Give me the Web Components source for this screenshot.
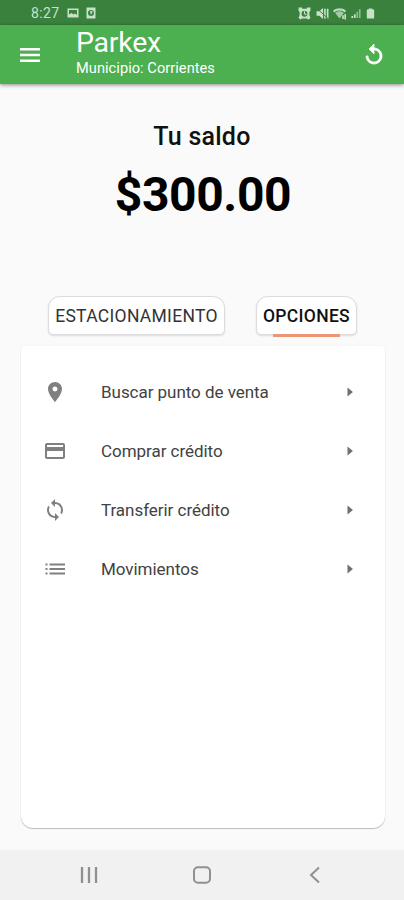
<!DOCTYPE html>
<html lang="es">
<head>
<meta charset="utf-8">
<title>Parkex</title>
<style>
html,body{margin:0;height:100%;background:#fafafa}
body{font-family:Roboto,"Liberation Sans",sans-serif}
</style>
</head>
<body>
<parkex-app></parkex-app>
<script>
const define = (name, html) => customElements.define(name, class extends HTMLElement {
  constructor() {
    super();
    this.attachShadow({ mode: 'open' }).innerHTML = html;
  }
});

const ICONS = {
  menu: '<path d="M2 5h20v2.600H2zm0 5.700h20v2.600H2zM2 16.400h20V19H2z"/>',
  replay: '<path stroke="currentColor" stroke-width=".8" d="M12 5V1L7 6l5 5V7c3.31 0 6 2.69 6 6s-2.690 6-6 6-6-2.690-6-6H4c0 4.420 3.580 8 8 8s8-3.580 8-8-3.580-8-8-8z"/>',
  place: '<path d="M12 2C8.13 2 5 5.13 5 9c0 5.25 7 13 7 13s7-7.75 7-13c0-3.87-3.13-7-7-7zm0 9.5a2.5 2.5 0 0 1 0-5 2.5 2.5 0 0 1 0 5z"/>',
  card: '<path d="M20 4H4c-1.11 0-1.99.89-1.99 2L2 18c0 1.11.89 2 2 2h16c1.11 0 2-.89 2-2V6c0-1.11-.89-2-2-2zm0 14H4v-6h16v6zm0-10H4V6h16v2z"/>',
  sync: '<path d="M12 4V1L8 5l4 4V6c3.31 0 6 2.69 6 6 0 1.01-.25 1.97-.7 2.8l1.46 1.46C19.54 15.03 20 13.57 20 12c0-4.42-3.58-8-8-8zm0 14c-3.31 0-6-2.69-6-6 0-1.01.25-1.97.7-2.8L5.24 7.74C4.46 8.97 4 10.43 4 12c0 4.42 3.58 8 8 8v3l4-4-4-4v3z"/>',
  list: '<path d="M2.500 13h2v-2h-2v2zm0 4.500h2v-2h-2v2zm0-9h2v-2h-2v2zM6.500 13H22v-2H6.500v2zm0 4.500H22v-2H6.500v2zm0-11v2H22v-2H6.500z"/>',
  arrow: '<path d="M9 6.500l6.500 5.500L9 17.500z"/>',
  image: '<path fill-rule="evenodd" d="M1 3h22v18H1zm3 3v9l5-3 4 3 3-2 4 3V6z"/><path d="M4 18l5-5 4 3 3-2 4 4z"/>',
  clip: '<path fill-rule="evenodd" d="M3 1h18v22H3zm9 5a6 6 0 1 0 0 12 6 6 0 0 0 0-12z"/><path d="M10.500 8h4v4l-3 3.500z"/>',
  alarm: '<path fill-rule="evenodd" d="M1 1h6l1 2h8l1-2h6v6l-2 2v6l2 5-3 3-4-2H8l-4 2-3-3 2-5V9L1 7zm11 6a5.500 5.500 0 1 0 0 11 5.500 5.500 0 0 0 0-11z"/><path d="M11 8h2v4l3 1-1 2-4-2z"/>',
  mute: '<path d="M1 8h5l7-6v20l-7-6H1zM15 3h3v18h-3zm5 0h3v18h-3z"/><path d="M2 3l20 18" stroke="#3a813d" stroke-width="1.800"/>',
  wifi: '<path d="M0 7C7 1 17 1 24 7l-2 3C16 5 8 5 2 10z" opacity=".9"/><path d="M4 11c5-4 11-4 16 0l-8 10z" opacity=".75"/><path d="M17 15h3v7h-3zM21 13h3v10h-3z"/>',
  signal: '<path d="M1 18h4v5H1zm6-4h4v9H7z"/><path d="M13 8h4v15h-4zm6-6h4v21h-4z" opacity=".6"/>',
  battery: '<path d="M8 1h8v2h4v20H4V3h4z"/>',
  recents: '<path d="M5 4v16M12 4v16M19 4v16" fill="none" stroke="currentColor" stroke-width="2.300"/>',
  home: '<rect x="4" y="4.300" width="16" height="15.400" rx="4" fill="none" stroke="currentColor" stroke-width="2"/>',
  back: '<path d="M16 4.500L8 12l8 7.500" fill="none" stroke="currentColor" stroke-width="2"/>'
};

customElements.define('px-icon', class extends HTMLElement {
  constructor() {
    super();
    this.attachShadow({ mode: 'open' });
  }
  connectedCallback() {
    this.shadowRoot.innerHTML = `<style>
      :host{display:block;flex:none;width:24px;height:24px}
      svg{display:block;width:100%;height:100%;fill:currentColor}
    </style><svg viewBox="0 0 24 24">${ICONS[this.getAttribute('name')]}</svg>`;
  }
});

define('px-status-bar', `<style>
  :host{display:flex;align-items:center;justify-content:space-between;box-sizing:border-box;height:25px;padding:1px 28px 0 31px;background:#3a813d;color:#c8e2c8;font-size:14px}
  div{display:flex;align-items:center}
  span{letter-spacing:.4px;width:36px}
  px-icon{width:12px;height:12px}
  .clip{margin-left:6px}
  .right{gap:4.500px}
  .right px-icon{width:13px;height:13px}
  .right .signal{width:10px;height:11px}
  .right .battery{width:11px}
</style>
<div><span>8:27</span><px-icon name="image"></px-icon><px-icon class="clip" name="clip"></px-icon></div>
<div class="right"><px-icon name="alarm"></px-icon><px-icon name="mute"></px-icon><px-icon name="wifi"></px-icon><px-icon class="signal" name="signal"></px-icon><px-icon class="battery" name="battery"></px-icon></div>`);

define('px-app-bar', `<style>
  :host{display:flex;box-sizing:border-box;height:59px;padding:0 18px;background:#4caf50;color:#fff;box-shadow:0 1px 4px rgba(0,0,0,.45);z-index:1}
  .menu{margin-top:18px}
  .replay{margin-top:18px}
  .titles{flex:1;margin-left:34px;white-space:nowrap;padding-top:1px}
  .title{font-size:28.500px;line-height:33px;letter-spacing:-.25px}
  .sub{font-size:14.600px;line-height:18px;letter-spacing:.05px}
</style>
<px-icon class="menu" name="menu"></px-icon>
<div class="titles"><div class="title"><slot name="title"></slot></div><div class="sub"><slot name="subtitle"></slot></div></div>
<px-icon class="replay" name="replay"></px-icon>`);

define('px-balance', `<style>
  :host{display:block;height:212px;text-align:center;color:#111;white-space:nowrap}
  .label{font-size:25px;line-height:28px;font-weight:500;letter-spacing:.25px;padding-top:39px}
  .amount{font-size:48px;line-height:56px;font-weight:700;letter-spacing:-.4px;color:#000;margin:16px 0 0 2px}
</style>
<div class="label"><slot name="label"></slot></div><div class="amount"><slot></slot></div>`);

define('px-tab', `<style>
  :host{display:flex;align-items:center;justify-content:center;position:relative;box-sizing:border-box;width:177px;height:39px;background:#fff;border:1px solid #dcdcdc;border-radius:12px 12px 5px 5px;box-shadow:0 1px 2px rgba(0,0,0,.12);font-size:17.500px;letter-spacing:.3px;color:#333;white-space:nowrap}
  :host([active]){width:101px;color:#111;font-weight:500}
  i{display:none;position:absolute;left:16px;bottom:-3px;width:67px;height:3px;background:#ec9674}
  :host([active]) i{display:block}
</style><span><slot></slot></span><i></i>`);

define('px-tabs', `<style>
  :host{display:flex;gap:31px;padding-left:48px}
</style><slot></slot>`);

customElements.define('px-menu-item', class extends HTMLElement {
  constructor() {
    super();
    this.attachShadow({ mode: 'open' });
  }
  connectedCallback() {
    this.shadowRoot.innerHTML = `<style>
  :host{display:flex;align-items:center;height:59px;padding:0 25px 0 22px;color:#424242;font-size:17px;letter-spacing:-.04px;white-space:nowrap}
  px-icon{color:#808080}
  span{flex:1;margin-left:34px}
  .arrow{width:20px;height:20px;color:#707070}
</style><px-icon name="${this.getAttribute('icon')}"></px-icon><span><slot></slot></span><px-icon class="arrow" name="arrow"></px-icon>`;
  }
});

define('px-card', `<style>
  :host{display:block;box-sizing:border-box;width:364px;height:482px;margin:11px 0 0 21px;padding-top:16px;background:#fff;border-radius:4px 4px 12px 12px;box-shadow:0 1px 1px rgba(0,0,0,.24),0 0 2px rgba(0,0,0,.06)}
</style><slot></slot>`);

define('px-nav-bar', `<style>
  :host{display:flex;align-items:center;justify-content:space-between;box-sizing:border-box;height:50px;padding:0 77px;margin-top:auto;background:#f1f1f1;color:#909090}
</style><px-icon name="recents"></px-icon><px-icon name="home"></px-icon><px-icon name="back"></px-icon>`);

define('parkex-app', `<style>
  :host{display:flex;flex-direction:column;width:404px;height:900px;background:#fafafa;overflow:hidden}
</style>
<px-status-bar></px-status-bar>
<px-app-bar><span slot="title">Parkex</span><span slot="subtitle">Municipio: Corrientes</span></px-app-bar>
<px-balance><span slot="label">Tu saldo</span>$300.00</px-balance>
<px-tabs><px-tab>ESTACIONAMIENTO</px-tab><px-tab active>OPCIONES</px-tab></px-tabs>
<px-card>
  <px-menu-item icon="place">Buscar punto de venta</px-menu-item>
  <px-menu-item icon="card">Comprar crédito</px-menu-item>
  <px-menu-item icon="sync">Transferir crédito</px-menu-item>
  <px-menu-item icon="list">Movimientos</px-menu-item>
</px-card>
<px-nav-bar></px-nav-bar>`);
</script>
</body>
</html>
